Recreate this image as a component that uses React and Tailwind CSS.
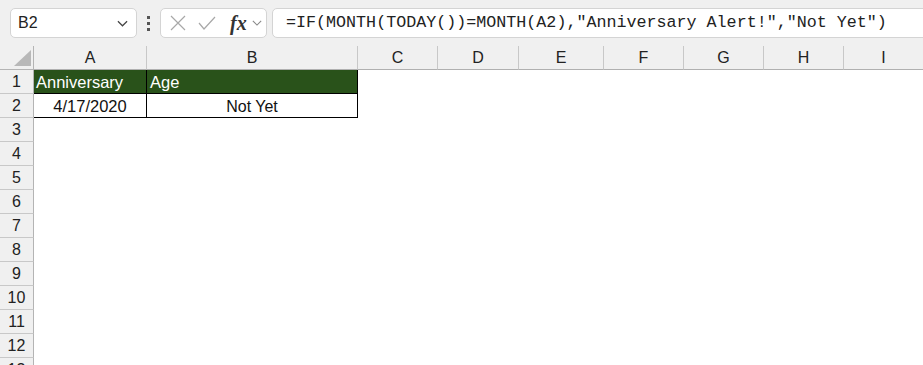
import React from "react";

const cols = [
  { name: "A", w: "w-[113px]" },
  { name: "B", w: "w-[211px]" },
  { name: "C", w: "w-[80px]" },
  { name: "D", w: "w-[81px]" },
  { name: "E", w: "w-[85px]" },
  { name: "F", w: "w-[80px]" },
  { name: "G", w: "w-[80px]" },
  { name: "H", w: "w-[80px]" },
  { name: "I", w: "w-[80px]" },
];

const rows = [1, 2, 3, 4, 5, 6, 7, 8, 9, 10, 11, 12, 13];

function Chevron({ className }) {
  return (
    <svg viewBox="0 0 12 7" className={className} fill="none" stroke="currentColor" strokeWidth="1.3">
      <path d="M1 1l5 5 5-5" />
    </svg>
  );
}

function Toolbar() {
  return (
    <div className="h-[46px] flex items-start pt-[8px] pl-[10px] bg-[#f0f0f0]">
      <div className="w-[127px] h-[30px] shrink-0 rounded-[5px] border border-[#d4d4d4] bg-white flex items-center pl-[7px] pr-[8px] justify-between">
        <span className="text-[16px] text-[#222]">B2</span>
        <Chevron className="w-[11px] h-[7px] text-[#444]" />
      </div>
      <div className="ml-[10px] h-[30px] flex flex-col justify-center gap-[3px]">
        <div className="w-[3px] h-[3px] bg-[#555]" />
        <div className="w-[3px] h-[3px] bg-[#555]" />
        <div className="w-[3px] h-[3px] bg-[#555]" />
      </div>
      <div className="ml-[10px] w-[107px] h-[30px] shrink-0 rounded-[5px] border border-[#d4d4d4] bg-white flex items-center pl-[9px]">
        <svg viewBox="0 0 16 16" className="w-[16px] h-[16px]" fill="none" stroke="#a8a8a8" strokeWidth="1.2">
          <path d="M1 1l14 14M15 1L1 15" />
        </svg>
        <svg viewBox="0 0 18 14" className="ml-[12px] w-[18px] h-[14px]" fill="none" stroke="#a8a8a8" strokeWidth="1.2">
          <path d="M1 7l5 6L17 1" />
        </svg>
        <span className="ml-[14px] italic font-bold text-[20px] leading-none text-[#333] [font-family:'Liberation_Serif',serif]">fx</span>
        <Chevron className="ml-[5px] w-[10px] h-[6px] text-[#888]" />
      </div>
      <div className="ml-[5px] flex-1 -mr-[10px] h-[30px] rounded-l-[5px] border border-[#d4d4d4] bg-white flex items-center pl-[13px]">
        <span className="text-[16.7px] text-[#222] whitespace-pre [font-family:'Liberation_Mono',monospace]">
          =IF(MONTH(TODAY())=MONTH(A2),"Anniversary Alert!","Not Yet")
        </span>
      </div>
    </div>
  );
}

function HeaderRow() {
  return (
    <div className="flex h-[24px]">
      <div className="w-[34px] h-full shrink-0 bg-[#f0f0f0] border-r border-b border-[#b4b4b4] relative">
        <svg viewBox="0 0 17 16" className="absolute left-[14px] top-[4px] w-[17px] h-[16px]">
          <path d="M17 0V16H0Z" fill="#b8b8b8" />
        </svg>
      </div>
      {cols.map((c) => (
        <div
          key={c.name}
          className={`${c.w} h-full shrink-0 bg-[#f0f0f0] border-r border-[#c8c8c8] border-b-[1px] border-b-[#b0b0b0] flex items-center justify-center text-[16px] text-[#222]`}
        >
          {c.name}
        </div>
      ))}
    </div>
  );
}

function Cell({ row, col }) {
  if (row === 1 && col === "A")
    return (
      <div className="w-[113px] h-full shrink-0 bg-[#29521a] border-r border-b border-black text-white text-[16.5px] flex items-center pl-[2px] pt-[2px]">
        Anniversary
      </div>
    );
  if (row === 1 && col === "B")
    return (
      <div className="w-[211px] h-full shrink-0 bg-[#29521a] border-r border-b border-black text-white text-[16.5px] flex items-center pl-[3px] pt-[2px]">
        Age
      </div>
    );
  if (row === 2 && col === "A")
    return (
      <div className="w-[113px] h-full shrink-0 bg-white border-r border-b border-black text-[#111] text-[16.5px] flex items-center justify-center pt-[2px]">
        4/17/2020
      </div>
    );
  if (row === 2 && col === "B")
    return (
      <div className="w-[211px] h-full shrink-0 bg-white border-r border-b border-black text-[#111] text-[16px] flex items-center justify-center pt-[2px]">
        Not Yet
      </div>
    );
  return null;
}

export default function App() {
  return (
    <div className="w-[923px] h-[365px] overflow-hidden bg-white [font-family:'Liberation_Sans',Arial,sans-serif]">
      <Toolbar />
      <HeaderRow />
      {rows.map((r) => (
        <div key={r} className="flex h-[24px]">
          <div className="w-[34px] h-full shrink-0 bg-[#f0f0f0] border-r border-r-[#b4b4b4] border-b border-b-[#c8c8c8] flex items-center justify-center text-[16px] text-[#222] pt-[1px]">
            {r}
          </div>
          {r <= 2 && (
            <>
              <Cell row={r} col="A" />
              <Cell row={r} col="B" />
            </>
          )}
        </div>
      ))}
    </div>
  );
}
